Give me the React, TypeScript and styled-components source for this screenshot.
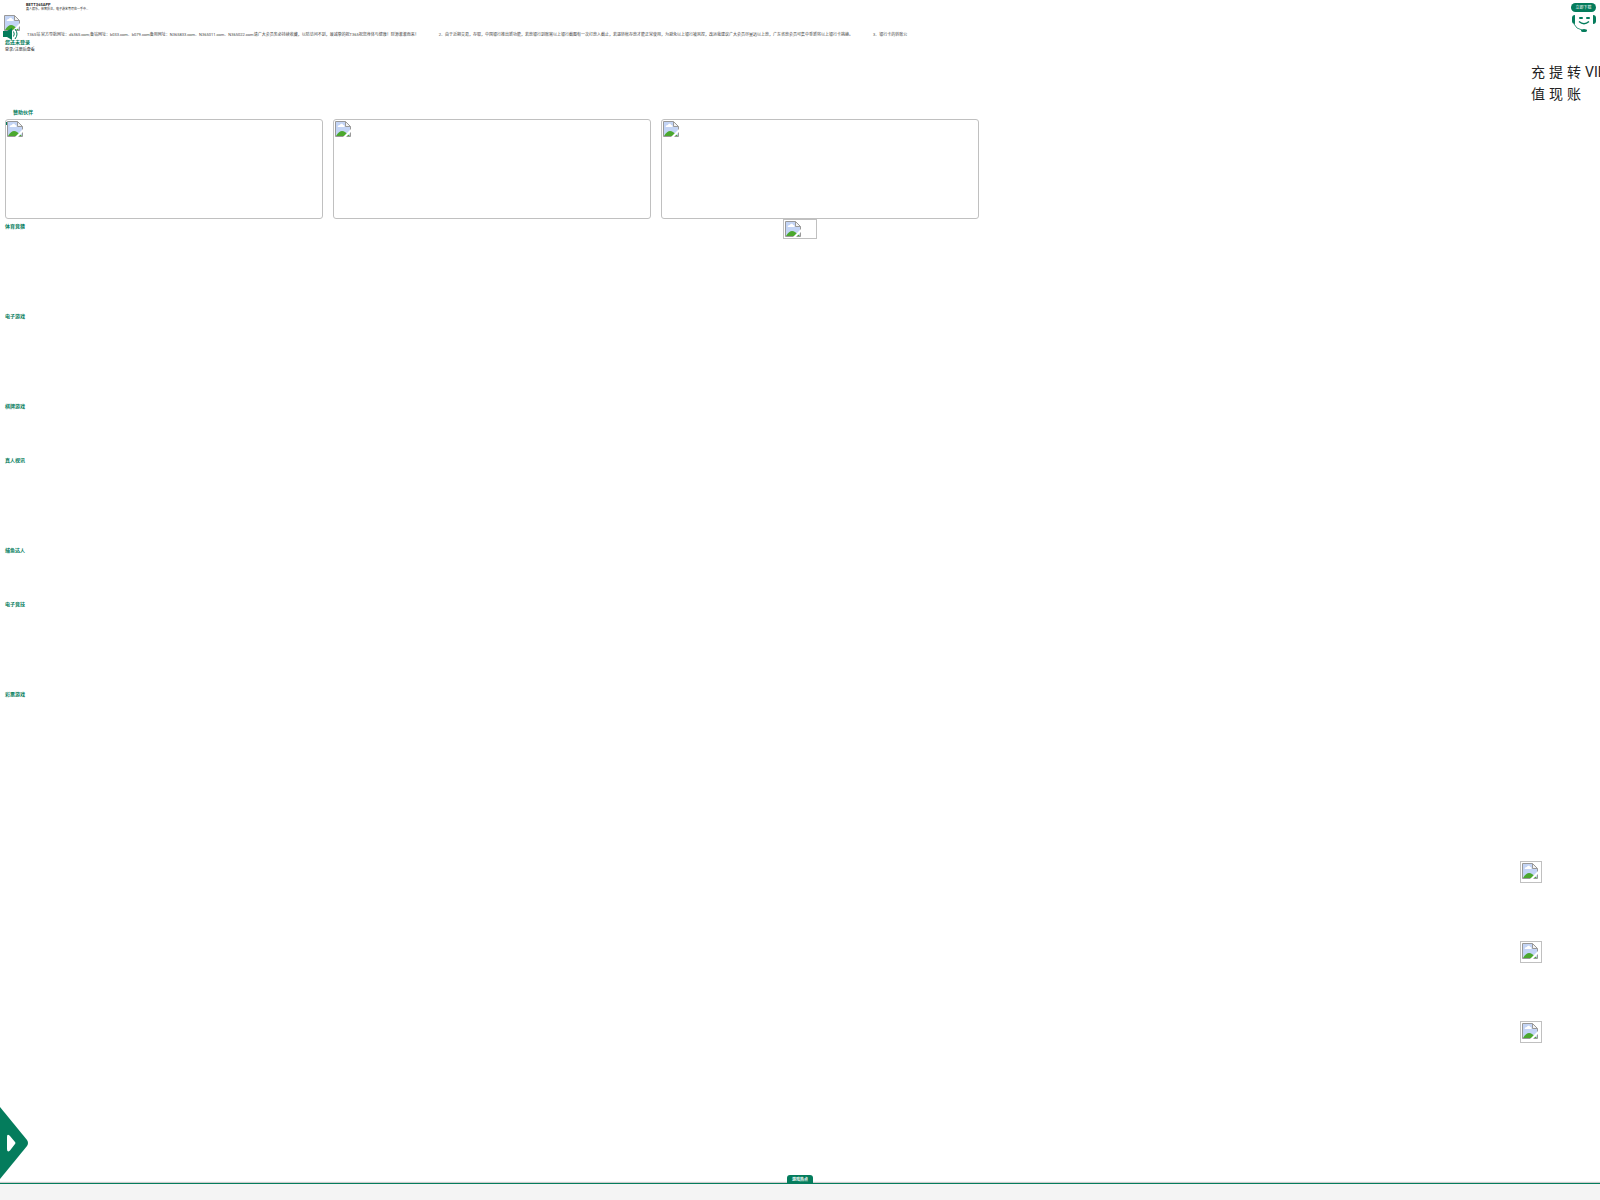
import React from "react";
import styled, { createGlobalStyle } from "styled-components";

const green = "#047c5c";

const GlobalStyle = createGlobalStyle`
  * { box-sizing: border-box; }
  body {
    margin: 0;
    overflow-x: hidden;
    background: #fff;
    color: #222;
    font-family: Roboto, "Noto Sans CJK SC", sans-serif;
  }
  button { font-family: inherit; border: 0; padding: 0; margin: 0; background: none; color: inherit; cursor: pointer; }
  h1, h2, p, ul { margin: 0; padding: 0; }
  svg { display: block; flex: none; }
`;

const Page = styled.div`
  min-height: 100vh;
  overflow: hidden;
`;

const AppBar = styled.header`
  display: flex;
  justify-content: space-between;
  height: 14px;
  padding: 2px 4px 0 26px;
`;

const AppTitle = styled.h1`
  font-size: 4px;
  line-height: 5px;
  font-weight: 700;
`;

const AppSlogan = styled.p`
  font-size: 3px;
  line-height: 4px;
`;

const DownloadButton = styled.button`
  width: 25px;
  height: 9px;
  margin-top: 1px;
  border-radius: 5px;
  background: ${green};
  color: #fff;
  font-size: 4px;
  line-height: 8px;
`;

const BrandRow = styled.div`
  display: flex;
  justify-content: space-between;
  height: 18px;
  padding: 0 4px;
`;

const Logo = styled.a`
  padding-top: 1px;
`;

const Notice = styled.section`
  position: relative;
  display: flex;
  align-items: center;
  gap: 9px;
  height: 12px;
  margin-top: -4px;
  padding-left: 3px;
`;

const NoticeList = styled.ul`
  display: flex;
  gap: 20px;
  padding-top: 2px;
  list-style: none;
  white-space: nowrap;
  color: #444;
  font-size: 4px;
  line-height: 6px;
`;

const Account = styled.section`
  display: flex;
  flex-direction: column;
  align-items: flex-start;
  gap: 2px;
  padding-left: 5px;
`;

const AccountName = styled.strong`
  color: ${green};
  font-size: 5px;
  line-height: 5px;
`;

const LoginButton = styled.button`
  font-size: 4px;
  line-height: 6px;
`;

const QuickActions = styled.nav`
  display: flex;
  justify-content: flex-end;
  gap: 4px;
  padding: 8px 1px 0 0;
`;

const QuickButton = styled.button`
  width: 14px;
  height: 44px;
  display: flex;
  align-items: flex-start;
  font-size: 14px;
  line-height: 22px;
  text-align: left;
`;

const SectionTitle = styled.h2<{ $inset?: boolean }>`
  padding-left: ${(p) => (p.$inset ? 13 : 5)}px;
  color: ${green};
  font-size: 5px;
  line-height: 14px;
  font-weight: 700;
`;

const Banners = styled.div`
  display: flex;
  gap: 10px;
  padding-left: 5px;
`;

const Banner = styled.div`
  flex: 0 0 318px;
  height: 100px;
  padding: 1px;
  border: 1px solid #c0c0c0;
  border-radius: 3px;

  &:first-child {
    background: linear-gradient(${green}, ${green}) 0 2px / 2px 3px no-repeat;
  }
`;

const Lobby = styled.main`
  position: relative;
`;

const Category = styled.section<{ $tall?: boolean }>`
  height: ${(p) => (p.$tall ? 90 : 54)}px;
`;

const Picture = styled.div<{ $wide?: boolean }>`
  width: ${(p) => (p.$wide ? 34 : 22)}px;
  height: ${(p) => (p.$wide ? 20 : 22)}px;
  padding: 1px;
  border: 1px solid #c0c0c0;
`;

const LobbyPicture = styled.div`
  position: absolute;
  top: 0;
  left: 50%;
  transform: translateX(-50%);
`;

const FloatingLinks = styled.aside`
  position: fixed;
  right: 58px;
  bottom: 157px;
  display: grid;
  gap: 58px;
`;

const DrawerButton = styled.button`
  position: fixed;
  left: 0;
  bottom: 20px;
`;

const BottomBar = styled.footer`
  position: fixed;
  left: 0;
  right: 0;
  bottom: 0;
  height: 17px;
  display: flex;
  justify-content: center;
  border-top: 1px solid ${green};
  background: #f4f4f4;
  box-shadow: 0 -1px 1px #ccc;
`;

const BottomTab = styled.button`
  width: 26px;
  height: 9px;
  margin-top: -9px;
  border-radius: 3px 3px 0 0;
  background: ${green};
  color: #fff;
  font-size: 4px;
  font-weight: 700;
  line-height: 8px;
`;

const MissingImage = () => (
  <svg width="16" height="16" viewBox="0 0 16 16" aria-hidden="true">
    <path d="M0 0H11L16 5V16H0Z" fill="#fff" />
    <path d="M1 1H11V5H15V15H1Z" fill="#c3d4f5" />
    <path d="M3 6C2 5 4 4 5 4C6 2 8 3 8 4C10 4 10 6 9 6Z" fill="#fff" />
    <path d="M1 15C4 10 7 9 10 11L15 15Z" fill="#4ba82e" />
    <path d="M10.5 .5V5.5H15.500" fill="#f2f2f2" stroke="#999" />
    <path d="M.5 15.500V.5H10.500L15.500 5.500V15.500Z" fill="none" stroke="#999" />
    <path d="M8 16L16 8V11L11 16Z" fill="#fff" />
  </svg>
);

const Speaker = () => (
  <svg width="15" height="12" viewBox="0 0 15 12" aria-hidden="true">
    <path d="M0 3H4L9 0V12L4 9H0Z" fill={green} />
    <path d="M10.500 3.500Q12 6 10.500 8.500M12 1Q16 6 12 11" fill="none" stroke={green} />
  </svg>
);

const Support = () => (
  <svg width="24" height="18" viewBox="0 0 24 18" aria-hidden="true">
    <path d="M3 1V10Q0 10 0 7V4Q0 1 3 1Z" fill={green} />
    <path d="M21 1V10Q24 10 24 7V4Q24 1 21 1Z" fill={green} />
    <rect x="7" y="3" width="4" height="2" rx="1" fill={green} />
    <rect x="14" y="3" width="4" height="2" rx="1" fill={green} />
    <path d="M7 7.500Q12 12 17 7.500" fill="none" stroke={green} strokeWidth="1.500" />
    <path d="M2 10Q4 15 10 16" fill="none" stroke={green} strokeWidth=".8" />
    <ellipse cx="12" cy="16.500" rx="3" ry="1.500" fill={green} />
  </svg>
);

const DrawerArrow = () => (
  <svg width="28" height="74" viewBox="0 0 28 74" aria-hidden="true">
    <path d="M0 1L27 34Q29 37 27 40L0 73Z" fill={green} />
    <path d="M7 31Q7 27 10 30L15 36Q16 37 15 38L10 44.500Q7 47 7 43Z" fill="#fff" />
  </svg>
);

const notices = [
  "T365站 官方导航网址：dk365.com;备站网址：b033.com、b079.com备用网址：N365833.com、N365011.com、N365022.com请广大会员务必持续收藏，以防访问不到，最诚挚的祝T365祝您身体与健康！财源滚滚而来！",
  "2、由于近期交易，存取，中国银行推出新功能，若款银行到账需以上银行截图有一次打款入截止，若遇转帐存款才能正常使用，为避免以上银行被风控，改运我建议广大会员尽量远以上款，广东省款会员可集中重新将以上银行卡挑换。",
  "3、银行卡的转账公",
];

const categories = [
  { name: "体育竞猜", tall: true },
  { name: "电子游戏", tall: true },
  { name: "棋牌游戏", tall: false },
  { name: "真人视讯", tall: true },
  { name: "捕鱼达人", tall: false },
  { name: "电子竞技", tall: true },
  { name: "彩票游戏", tall: true },
];

export default function App() {
  return (
    <Page>
      <GlobalStyle />
      <AppBar>
        <div>
          <AppTitle>BETT365APP</AppTitle>
          <AppSlogan>真人娱乐，体育投注，电子游艺等尽在一手中...</AppSlogan>
        </div>
        <DownloadButton>立即下载</DownloadButton>
      </AppBar>
      <BrandRow>
        <Logo href="#" aria-label="首页"><MissingImage /></Logo>
        <button aria-label="客服"><Support /></button>
      </BrandRow>
      <Notice>
        <Speaker />
        <NoticeList>
          {notices.map((text) => <li key={text}>{text}</li>)}
        </NoticeList>
      </Notice>
      <Account>
        <AccountName>您还未登录</AccountName>
        <LoginButton>登录/注册后查看</LoginButton>
      </Account>
      <QuickActions>
        {["充值", "提现", "转账", "VIP"].map((label) => (
          <QuickButton key={label}>{label}</QuickButton>
        ))}
      </QuickActions>
      <SectionTitle $inset>赞助伙伴</SectionTitle>
      <Banners>
        {[1, 2, 3].map((n) => <Banner key={n}><MissingImage /></Banner>)}
      </Banners>
      <Lobby>
        {categories.map(({ name, tall }) => (
          <Category key={name} $tall={tall}>
            <SectionTitle>{name}</SectionTitle>
          </Category>
        ))}
        <LobbyPicture><Picture $wide><MissingImage /></Picture></LobbyPicture>
      </Lobby>
      <FloatingLinks>
        {[1, 2, 3].map((n) => <Picture key={n}><MissingImage /></Picture>)}
      </FloatingLinks>
      <DrawerButton aria-label="展开菜单"><DrawerArrow /></DrawerButton>
      <BottomBar><BottomTab>游戏热点</BottomTab></BottomBar>
    </Page>
  );
}
